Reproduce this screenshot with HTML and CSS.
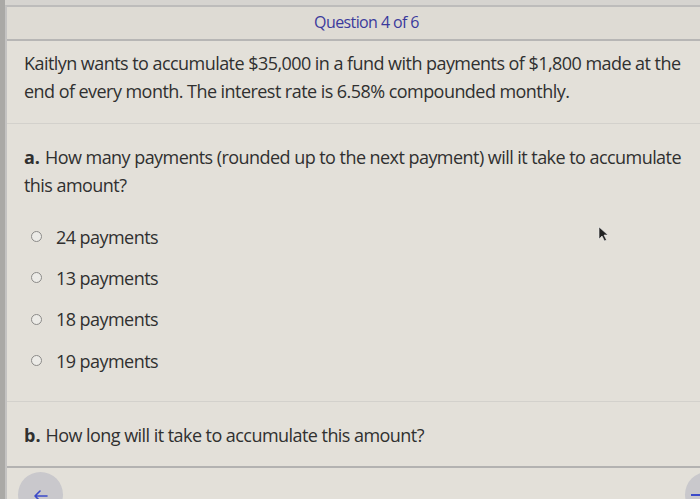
FILE: index.html
```html
<!DOCTYPE html>
<html lang="en">
<head>
<meta charset="utf-8">
<title>Question 4 of 6</title>
<link rel="stylesheet" href="styles.css">
</head>
<body>
<div class="screen">
  <div class="panel">
    <header class="qhead">Question 4 of 6</header>
    <section class="stem">
      <p>Kaitlyn wants to accumulate $35,000 in a fund with payments of $1,800 made at the end of every month. The interest rate is 6.58% compounded monthly.</p>
    </section>
    <section class="part">
      <p class="prompt"><b class="lbl">a.</b>How many payments (rounded up to the next payment) will it take to accumulate this amount?</p>
      <ul class="options">
        <li><span class="radio"></span>24 payments</li>
        <li><span class="radio"></span>13 payments</li>
        <li><span class="radio"></span>18 payments</li>
        <li><span class="radio"></span>19 payments</li>
      </ul>
    </section>
    <section class="part part-b">
      <p class="prompt"><b class="lbl">b.</b>How long will it take to accumulate this amount?</p>
    </section>
    <footer class="nav">
      <span class="navbtn prev">
        <svg width="16" height="12" viewBox="0 0 16 12"><path d="M14 6H2M7 1L2 6l5 5" fill="none" stroke="#3b49c9" stroke-width="1.6" stroke-linecap="round" stroke-linejoin="round"/></svg>
      </span>
      <span class="navbtn next"><span class="dash"></span></span>
    </footer>
  </div>
  <svg class="cursor" width="12" height="16" viewBox="0 0 12 16"><path d="M1 1v12l3-3 2.5 5 2-1-2.5-5H10z" fill="#222" stroke="#eee" stroke-width="0.6"/></svg>
</div>
</body>
</html>
```
FILE: styles.css
```css
html, body {
  margin: 0;
  padding: 0;
}
body {
  background: #d6d4d0;
  font-family: "Open Sans", "Liberation Sans", sans-serif;
  color: #303030;
}
.screen {
  position: relative;
  width: 700px;
  height: 499px;
  overflow: hidden;
  padding-top: 5px;
  box-sizing: border-box;
  border-left: 5px solid #aaa9a6;
  background: #d6d4d0;
}
.panel {
  height: 494px;
  background: #e3e0d9;
  border-left: 2px solid #c4c3c2;
  border-top: 2px solid #bdbcbb;
  display: flex;
  flex-direction: column;
  overflow: hidden;
}
.qhead {
  height: 32px;
  line-height: 31px;
  text-align: center;
  font-size: 16px;
  letter-spacing: -0.6px;
  color: #3b3a9c;
  background: #dedbd4;
  border-bottom: 2px solid #b7b6b5;
  padding-left: 26px;
  flex: none;
}
p { margin: 0; }
.lbl {
  font-weight: 700;
  letter-spacing: 0;
  margin-right: 5px;
}
.stem {
  padding: 8px 16px 0 17px;
  height: 83px;
  box-sizing: border-box;
  border-bottom: 1px solid #d3d1cc;
  font-size: 18px;
  line-height: 28px;
  letter-spacing: -0.55px;
  flex: none;
}
.part {
  padding: 19px 16px 0 17px;
  font-size: 18px;
  line-height: 28px;
  letter-spacing: -0.55px;
  flex: none;
}
.options {
  list-style: none;
  margin: 17px 0 0;
  padding: 0 0 0 7px;
}
.options li {
  display: flex;
  align-items: center;
  height: 41.33px;
  font-size: 18px;
}
.radio {
  width: 9px;
  height: 9px;
  border: 1.5px solid #8b8a88;
  border-radius: 50%;
  margin-right: 14px;
  background: #ecebe7;
}
.part-b {
  margin-top: 20px;
  border-top: 1px solid #d3d1cc;
  padding-top: 19px;
  height: 65px;
  box-sizing: border-box;
}
.nav {
  border-top: 2px solid #b3b2b1;
  display: flex;
  justify-content: space-between;
  padding: 4px 0 0 11px;
  flex: none;
}
.navbtn {
  width: 45px;
  height: 45px;
  border-radius: 50%;
  background: #c9c8cc;
  display: flex;
  justify-content: center;
  padding-top: 18px;
  box-sizing: border-box;
}
.next {
  margin-right: -30px;
}
.dash {
  width: 10px;
  height: 2px;
  margin-top: 4px;
  margin-left: -24px;
  background: #3b49c9;
}
.cursor {
  position: absolute;
  left: 593px;
  top: 226px;
}
```
